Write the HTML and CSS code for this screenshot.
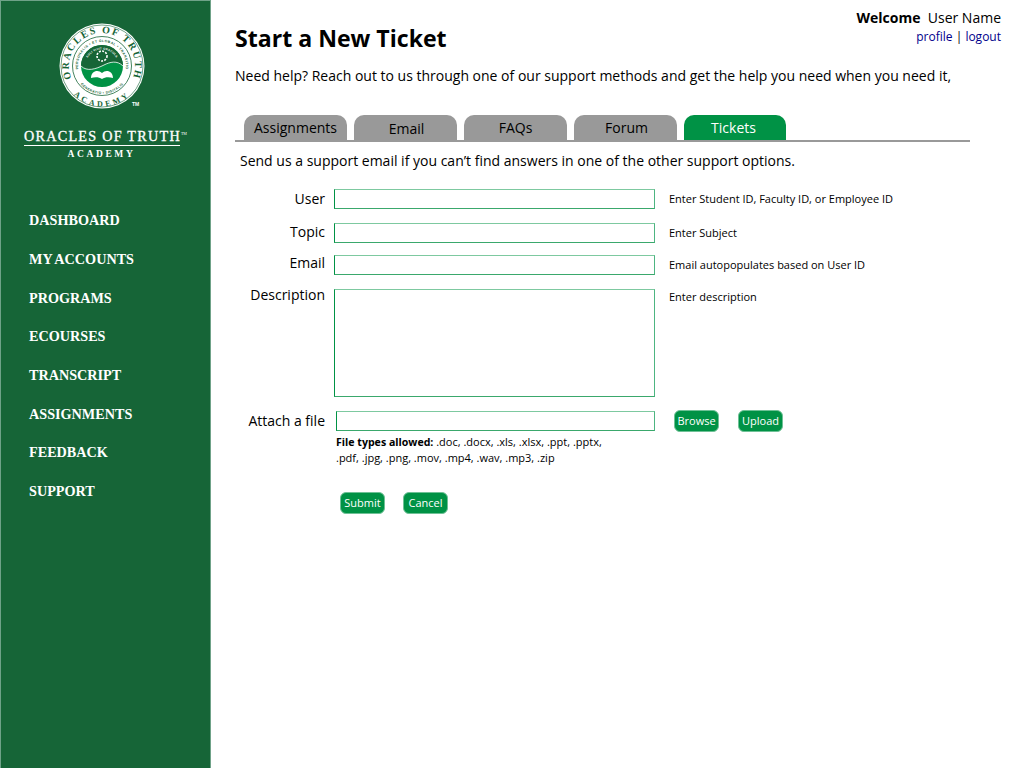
FILE: index.html
```html
<!DOCTYPE html>
<html lang="en">
<head>
  <meta charset="UTF-8" />
  <title>Start a New Ticket</title>
  <link rel="stylesheet" href="styles.css">
</head>
<body>
  <div class="layout">
    <div class="sidebar">
      <div class="logo">
        <svg class="seal" width="90" height="90" viewBox="0 0 90 90">
          <defs>
            <path id="arcTop" d="M45 78 A33 33 0 1 1 45 12 A33 33 0 1 1 45 78" />
            <path id="arcBottom" d="M4.5 45 A40.5 40.5 0 0 0 85.5 45" />
            <path id="arcInner" d="M45 69 A24 24 0 1 1 45 21 A24 24 0 1 1 45 69" />
            <path id="arcInnerLow" d="M17 45 A28 28 0 0 0 73 45" />
            <path id="arcCore" d="M28.5 45 A16.5 16.5 0 0 1 61.5 45" />
          </defs>
          <circle cx="45" cy="45" r="42.5" fill="#fff" />
          <circle cx="45" cy="45" r="41" fill="none" stroke="#166537" stroke-width="0.6" />
          <circle cx="45" cy="45" r="29.5" fill="none" stroke="#166537" stroke-width="0.8" />
          <circle cx="45" cy="45" r="21" fill="#009245" />
          <path d="M24 45 A21 21 0 0 1 66 45 C60 39 53 41 47 44 C39 48 30 51 24 45Z" fill="#166537" />
          <path d="M24 45 C30 51 39 48 47 44 C53 41 60 39 66 45" fill="none" stroke="#fff" stroke-width="0.8" />
          <circle cx="45" cy="35" r="5" fill="none" stroke="#fff" stroke-width="1.6" stroke-dasharray="2 1.3" />
          <path d="M34 57 C34 50 41 48 45 52 C49 48 56 50 56 57 C52 56 48 56 45 58 C42 56 38 56 34 57Z" fill="#fff" />
          <text class="seal-big"><textPath href="#arcTop" startOffset="50%" text-anchor="middle">ORACLES OF TRUTH</textPath></text>
          <text class="seal-low"><textPath href="#arcBottom" startOffset="50%" text-anchor="middle">ACADEMY</textPath></text>
          <text class="seal-small"><textPath href="#arcInner" startOffset="50%" text-anchor="middle">PERSONALIS • ET GLOBAL • TRANSITIO</textPath></text>
          <text class="seal-small"><textPath href="#arcInnerLow" startOffset="50%" text-anchor="middle">GENERATIO • DIGITALIS</textPath></text>
          <text class="seal-core"><textPath href="#arcCore" startOffset="50%" text-anchor="middle">SOLI VIVIT ORACULA</textPath></text>
        </svg>
        <span class="seal-tm">TM</span>
        <div class="brand">ORACLES OF TRUTH<sup>TM</sup></div>
        <div class="brand-sub">ACADEMY</div>
      </div>
      <ul class="nav">
        <li>DASHBOARD</li>
        <li>MY ACCOUNTS</li>
        <li>PROGRAMS</li>
        <li>ECOURSES</li>
        <li>TRANSCRIPT</li>
        <li>ASSIGNMENTS</li>
        <li>FEEDBACK</li>
        <li>SUPPORT</li>
      </ul>
    </div>

    <div class="content">
      <div class="header">
        <h1>Start a New Ticket</h1>
        <div class="user">
          <div><strong>Welcome</strong>&nbsp; User Name</div>
          <div class="user-links"><a href="#">profile</a> | <a href="#">logout</a></div>
        </div>
      </div>
      <p class="intro">Need help? Reach out to us through one of our support methods and get the help you need when you need it,</p>

      <div class="tabs">
        <div class="tab">Assignments</div>
        <div class="tab tab-email">Email</div>
        <div class="tab">FAQs</div>
        <div class="tab tab-forum">Forum</div>
        <div class="tab active">Tickets</div>
      </div>
      <p class="lead">Send us a support email if you can’t find answers in one of the other support options.</p>

      <form class="ticket">
        <div class="row row-user">
          <label>User</label>
          <input type="text">
          <span class="hint">Enter Student ID, Faculty ID, or Employee ID</span>
        </div>
        <div class="row row-topic">
          <label>Topic</label>
          <input type="text">
          <span class="hint">Enter Subject</span>
        </div>
        <div class="row row-email">
          <label>Email</label>
          <input type="text">
          <span class="hint">Email autopopulates based on User ID</span>
        </div>
        <div class="row row-desc">
          <label>Description</label>
          <textarea></textarea>
          <span class="hint">Enter description</span>
        </div>
        <div class="row row-file">
          <label>Attach a file</label>
          <input type="text" class="file-input">
          <div class="file-buttons">
            <button type="button" class="btn">Browse</button>
            <button type="button" class="btn">Upload</button>
          </div>
        </div>
        <p class="types"><strong>File types allowed:</strong> .doc, .docx, .xls, .xlsx, .ppt, .pptx,<br>.pdf, .jpg, .png, .mov, .mp4, .wav, .mp3, .zip</p>
        <div class="actions">
          <button type="button" class="btn">Submit</button>
          <button type="button" class="btn">Cancel</button>
        </div>
      </form>
    </div>
  </div>
</body>
</html>
```
FILE: styles.css
```css
* { box-sizing: border-box; }
html, body { margin: 0; padding: 0; }
body { font-family: "Open Sans", "Liberation Sans", sans-serif; color: #000; background: #fff; }

.layout { display: flex; min-height: 768px; }

.sidebar {
  width: 211px;
  flex: none;
  background: #166537;
  border: 1px solid #6fa288;
  border-bottom: none;
  height: 768px;
}
.logo { position: relative; padding-top: 20px; text-align: center; height: 191px; }
.seal { display: block; margin-left: 56px; }
.seal-big { font: bold 10px "Liberation Serif", serif; fill: #166537; letter-spacing: 1.7px; }
.seal-low { font: bold 8px "Liberation Serif", serif; fill: #166537; letter-spacing: 3px; }
.seal-small { font: bold 3.4px "Liberation Sans", sans-serif; fill: #166537; letter-spacing: 0.45px; }
.seal-core { font: bold 2.8px "Liberation Sans", sans-serif; fill: #fff; letter-spacing: 0.3px; }
.seal-tm { position: absolute; left: 131px; top: 100px; font: bold 5px "Liberation Sans", sans-serif; color: #fff; }
.brand {
  margin: 17px 0 0 23px;
  width: 156px;
  padding-bottom: 1px;
  border-bottom: 1px solid #fff;
  font: 14.2px/16px "Liberation Serif", serif;
  -webkit-text-stroke: 0.3px #fff;
  letter-spacing: 1.25px;
  color: #fff;
  text-align: left;
  white-space: nowrap;
}
.brand sup { font-size: 4px; line-height: 0; letter-spacing: 0; vertical-align: 6px; -webkit-text-stroke: 0; }
.brand-sub {
  margin: 2px 0 0 0;
  padding-right: 8px;
  font: bold 9.5px/12px "Liberation Serif", serif;
  letter-spacing: 2.6px;
  color: #fff;
}

.nav { list-style: none; margin: 0; padding: 18.2px 0 0 28px; }
.nav li {
  height: 38.7px;
  font: bold 14.2px/20px "Liberation Serif", serif;
  word-spacing: -0.5px;
  color: #fff;
  white-space: nowrap;
}

.content { flex: 1; min-width: 0; padding: 0 23px 0 24px; }

.header { display: flex; justify-content: space-between; align-items: flex-start; }
h1 { margin: 22px 0 0; font-size: 23.1px; line-height: 32px; font-weight: 700; }
.user { margin-top: 8px; text-align: right; font-size: 14px; line-height: 20px; }
.user-links { font-size: 12px; line-height: 18px; }
.user-links a { color: #00008b; text-decoration: none; }

.intro { margin: 12px 0 0; font-size: 14px; line-height: 20px; white-space: nowrap; }

.tabs {
  display: flex;
  gap: 7px;
  margin: 29px 31px 0 0;
  padding-left: 9px;
  height: 27px;
  border-bottom: 2px solid #999;
}
.tab {
  width: 103px;
  height: 25px;
  background: #999;
  border-radius: 10px 10px 0 0;
  font-size: 14px;
  line-height: 25px;
  text-align: center;
}
.tab-email { line-height: 27px; padding-left: 2px; }
.tab-forum { padding-left: 2px; }
.tab.active { width: 102px; background: #009245; color: #fff; padding-right: 3px; }

.lead { margin: 9px 0 0 5px; font-size: 14px; line-height: 20px; white-space: nowrap; }

.ticket { margin-top: 18px; }
.row {
  display: grid;
  grid-template-columns: 90px 321px auto;
  column-gap: 9px;
  align-items: start;
}
.row label { font-size: 14px; line-height: 20px; text-align: right; }
.row input, .row textarea {
  display: block;
  width: 321px;
  height: 20px;
  margin: 0;
  padding: 0;
  background: #fff;
  border: 1px solid #009245;
  border-top-color: #7dc9a0;
  border-right-color: #4db581;
  border-bottom-color: #3aa86c;
  border-radius: 0;
  resize: none;
}
.row textarea { height: 108px; }
.hint { margin-left: 5px; font-size: 11px; line-height: 20px; }
.row-topic { margin-top: 14px; }
.row-topic label { margin-top: -1px; }
.row-email { margin-top: 12px; }
.row-email label { margin-top: -2px; }
.row-desc { margin-top: 14px; }
.row-desc label { margin-top: -4px; }
.row-desc .hint { margin-top: -2px; }
.row-file { margin-top: 14px; }
.row-file .file-input { width: 319px; margin-left: 2px; }
.file-buttons { display: flex; gap: 19px; margin: -1px 0 -1px 10px; }

.btn {
  width: 45px;
  height: 22px;
  padding: 0;
  border: 1px solid #6fc196;
  border-radius: 6px;
  background: #009245;
  color: #fff;
  font-family: "Open Sans", sans-serif;
  font-size: 11px;
  line-height: 20px;
}

.types { margin: 3px 0 0 101px; font-size: 11px; line-height: 16px; white-space: nowrap; }
.types strong { font-size: 10.6px; }
.actions { display: flex; gap: 18px; margin: 26px 0 0 105px; }
```
